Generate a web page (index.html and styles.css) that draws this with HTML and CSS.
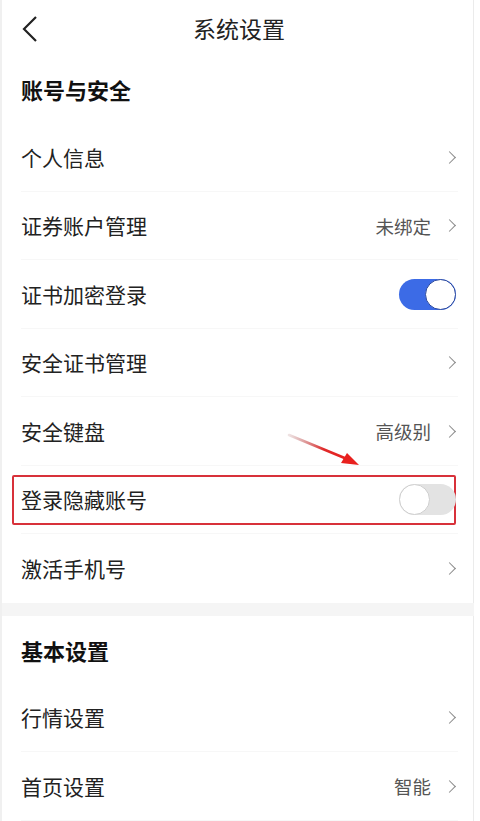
FILE: index.html
```html
<!DOCTYPE html>
<html lang="zh-CN">
<head>
    <meta charset="UTF-8">
    <meta name="viewport" content="width=device-width, initial-scale=1.0">
    <title>系统设置</title>
    <link rel="stylesheet" href="styles.css">
</head>
<body>
    <div class="page">

        <!-- Header -->
        <div class="topbar">
            <svg class="back" width="18" height="28" viewBox="0 0 18 28">
                <path d="M15 2 L3 14 L15 26" fill="none" stroke="#222" stroke-width="2.2"/>
            </svg>
            <div class="title">系统设置</div>
        </div>

        <!-- 账号与安全 -->
        <div class="section-title">账号与安全</div>
        <div class="row">
            <span class="label">个人信息</span>
            <span class="right"><i class="chev"></i></span>
        </div>
        <div class="row">
            <span class="label">证券账户管理</span>
            <span class="right"><span class="value">未绑定</span><i class="chev"></i></span>
        </div>
        <div class="row">
            <span class="label">证书加密登录</span>
            <span class="right"><span class="switch on"><span class="knob"></span></span></span>
        </div>
        <div class="row">
            <span class="label">安全证书管理</span>
            <span class="right"><i class="chev"></i></span>
        </div>
        <div class="row">
            <span class="label">安全键盘</span>
            <span class="right"><span class="value">高级别</span><i class="chev"></i></span>
        </div>
        <div class="row marked">
            <span class="label">登录隐藏账号</span>
            <span class="right"><span class="switch"><span class="knob"></span></span></span>
            <svg class="arrow" width="90" height="46" viewBox="0 0 90 46">
                <defs>
                    <linearGradient id="ag" x1="0" y1="0" x2="1" y2="0">
                        <stop offset="0" stop-color="#b07070" stop-opacity="0.2"/>
                        <stop offset="0.6" stop-color="#e02a2a"/>
                        <stop offset="1" stop-color="#e8201e"/>
                    </linearGradient>
                </defs>
                <path d="M4 4 L62 28" stroke="url(#ag)" stroke-width="2.6" stroke-linecap="round"/>
                <path d="M74 34 L56 32 L62 22 Z" fill="#e8201e"/>
            </svg>
        </div>
        <div class="row last">
            <span class="label">激活手机号</span>
            <span class="right"><i class="chev"></i></span>
        </div>

        <div class="gap"></div>

        <!-- 基本设置 -->
        <div class="section-title">基本设置</div>
        <div class="row">
            <span class="label">行情设置</span>
            <span class="right"><i class="chev"></i></span>
        </div>
        <div class="row">
            <span class="label">首页设置</span>
            <span class="right"><span class="value">智能</span><i class="chev"></i></span>
        </div>
    </div>
</body>
</html>
```

FILE: styles.css
```css
body {
    margin: 0;
    background: #fff;
    font-family: "Noto Sans CJK SC", "Noto Sans", sans-serif;
    color: #222;
}

.page {
    width: 480px;
    height: 821px;
    overflow: hidden;
    box-sizing: border-box;
    border-left: 2px solid #f0f0f0;
    border-right: 6px solid #fff;
    box-shadow: inset -1px 0 0 #ebebeb;
}

.topbar {
    height: 55px;
    position: relative;
    display: flex;
    align-items: center;
    justify-content: center;
}

.back {
    position: absolute;
    left: 19px;
    top: 15px;
}

.title {
    font-size: 23px;
    line-height: 1;
    margin-left: 2px;
    margin-top: 2px;
}

.section-title {
    height: 68px;
    display: flex;
    align-items: center;
    padding-left: 19px;
    font-size: 22px;
    font-weight: bold;
    color: #111;
}

.row {
    height: 68.5px;
    display: flex;
    align-items: center;
    justify-content: space-between;
    padding: 0 16px 0 19px;
    position: relative;
}

.row::after {
    content: "";
    position: absolute;
    left: 19px;
    right: 16px;
    bottom: 0;
    height: 1px;
    background: #f7f7f7;
}

.row.last::after {
    display: none;
}

.label {
    font-size: 21px;
    line-height: 1;
}

.right {
    display: flex;
    align-items: center;
}

.value {
    font-size: 18.5px;
    color: #555;
    margin-right: 14px;
}

.chev {
    display: inline-block;
    width: 8px;
    height: 8px;
    border-top: 1.6px solid #888;
    border-right: 1.6px solid #888;
    transform: rotate(45deg);
    margin-right: 4px;
}

.switch {
    width: 57px;
    height: 31px;
    border-radius: 16px;
    background: #e3e3e3;
    position: relative;
    display: block;
    margin-right: 2px;
}

.switch .knob {
    position: absolute;
    left: 0;
    top: 0;
    width: 31px;
    height: 31px;
    box-sizing: border-box;
    border-radius: 50%;
    background: #fff;
    border: 1.5px solid #cfcfcf;
}

.switch.on {
    background: #3c6be6;
}

.switch.on .knob {
    left: auto;
    right: 0;
    border-color: #2d4a9e;
}

.marked::before {
    content: "";
    position: absolute;
    left: 10px;
    right: 18px;
    top: 9px;
    bottom: 9px;
    border: 2px solid #d8313a;
    border-radius: 2px;
}

.arrow {
    position: absolute;
    left: 283px;
    top: -35px;
}

.gap {
    height: 13px;
    background: #f5f5f5;
}
```
